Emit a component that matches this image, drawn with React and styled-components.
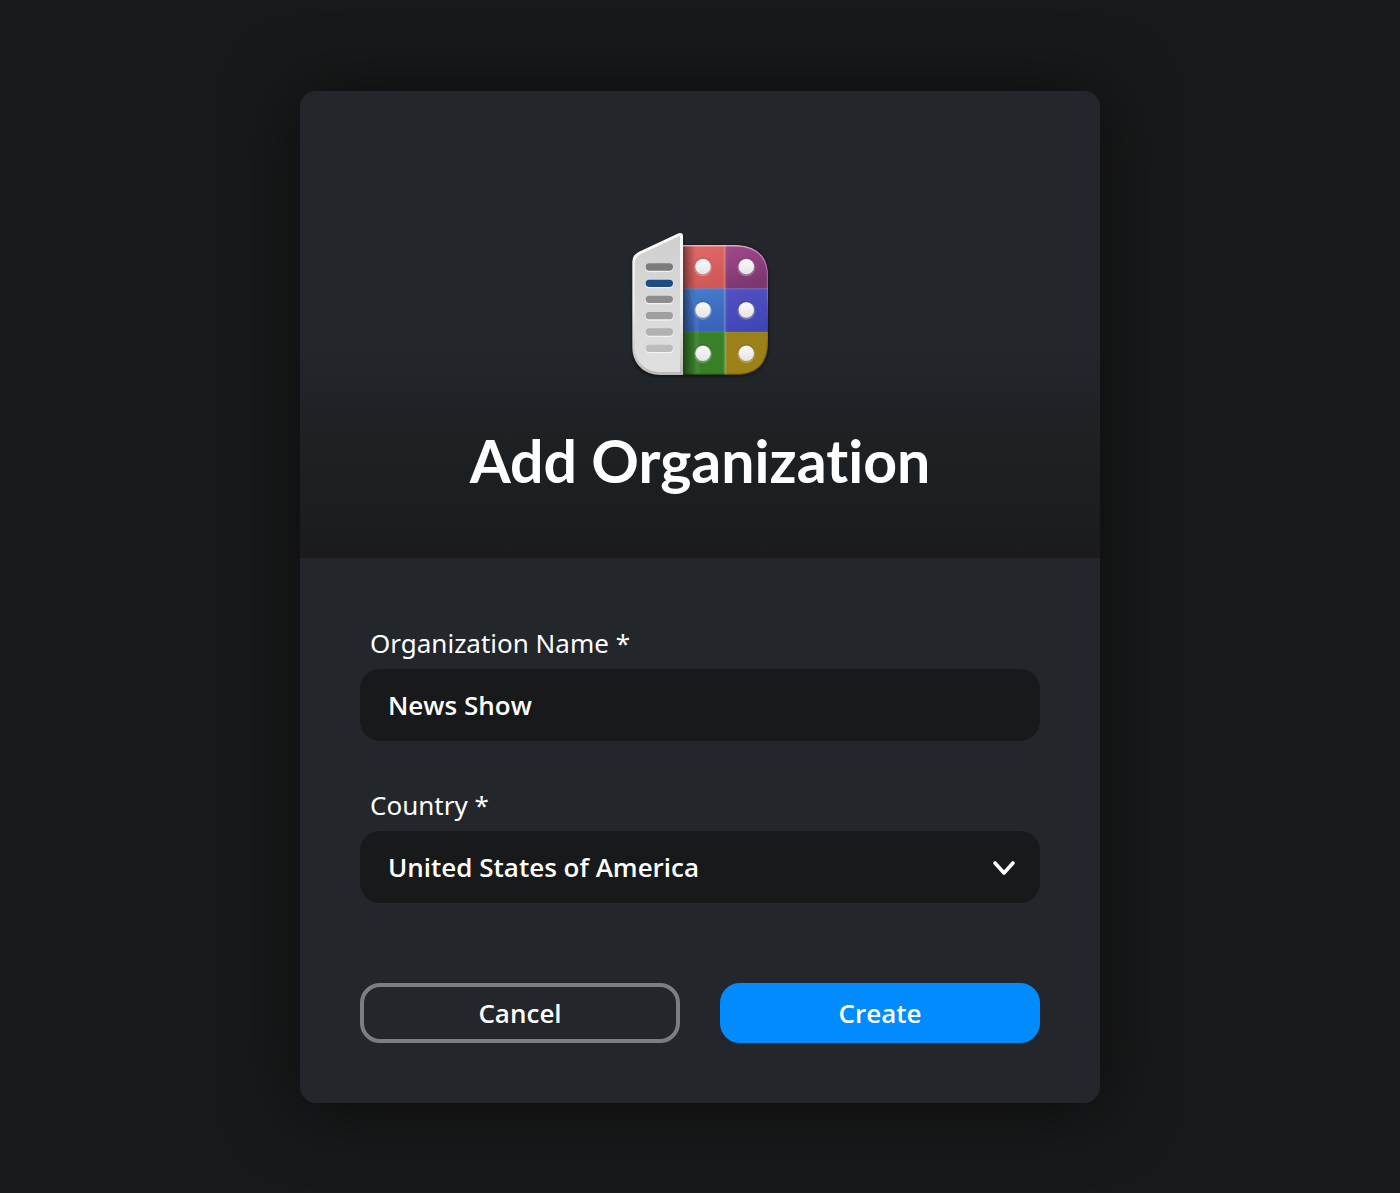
import React, { useState } from "react";
import styled, { createGlobalStyle, css } from "styled-components";

const GlobalStyle = createGlobalStyle`
  *, *::before, *::after { box-sizing: border-box; }
  body {
    margin: 0;
    background: #18191a;
    color: #fff;
    font-family: "Open Sans", "Noto Sans", sans-serif;
    font-size: 26px;
  }
`;

const Page = styled.main`
  min-height: 100vh;
  display: grid;
  grid-template-columns: minmax(0, 800px);
  place-content: center;
  padding: 40px 0;
`;

const Card = styled.section`
  border-radius: 16px;
  overflow: hidden;
  background: #23262b;
  box-shadow: 0 4px 70px rgba(0, 0, 0, 0.55);
`;

const Header = styled.header`
  display: flex;
  flex-direction: column;
  align-items: center;
  gap: 36px;
  padding: 134px 40px 57px;
  background: linear-gradient(#23262b 54%, #1d2123 76%, #1b1b1e 100%);
`;

const Title = styled.h1`
  margin: 0;
  font-family: Lato, sans-serif;
  font-size: 59px;
  line-height: 80px;
  font-weight: 700;
  font-variant-ligatures: none;
`;

const Form = styled.form`
  display: flex;
  flex-direction: column;
  gap: 39px;
  padding: 60px;
`;

const Field = styled.div`
  display: flex;
  flex-direction: column;
`;

const Label = styled.label`
  padding-left: 10px;
  font-family: "Noto Sans", "Open Sans", sans-serif;
  line-height: 51px;
`;

const control = css`
  width: 100%;
  height: 72px;
  border: 0;
  border-radius: 20px;
  padding: 0 28px;
  background: #18191a;
  color: inherit;
  font: inherit;
  font-weight: 600;
  outline-color: #008cff;
`;

const Input = styled.input`
  ${control}
`;

const SelectWrap = styled.div`
  display: grid;
  align-items: center;
  & > * { grid-area: 1 / 1; }
`;

const Select = styled.select`
  ${control}
  appearance: none;
`;

const Chevron = styled.svg`
  justify-self: end;
  margin-right: 20px;
  pointer-events: none;
`;

const Actions = styled.div`
  display: grid;
  grid-template-columns: 1fr 1fr;
  gap: 40px;
  padding-top: 41px;
`;

const Button = styled.button`
  height: 60px;
  border: 4px solid ${(p) => (p.$primary ? "#008cff" : "#7b7e80")};
  border-radius: 20px;
  background: ${(p) => (p.$primary ? "#008cff" : "transparent")};
  color: inherit;
  font: inherit;
  font-weight: 600;
  line-height: 36px;
  cursor: pointer;
`;

const tiles = [
  [186, 60, 129, 131, "red"],
  [315, 60, 130, 131, "purple"],
  [186, 191, 129, 130, "blue"],
  [315, 191, 130, 130, "indigo"],
  [186, 321, 129, 130, "green"],
  [315, 321, 130, 130, "gold"],
];

const tileColors = {
  red: ["#e36a6a", "#d05957"],
  purple: ["#a34a8d", "#7c376f"],
  blue: ["#4680cf", "#3a63bb"],
  indigo: ["#5450c4", "#4047b4"],
  green: ["#39822b", "#387f28"],
  gold: ["#9b811c", "#9d8117"],
};

const bars = [
  [126, "#7c7c7c"],
  [175, "#1d4b84"],
  [223, "#8d8d8d"],
  [272, "#9f9f9f"],
  [321, "#b1b1b1"],
  [370, "#bcbcbc"],
];

function AppLogo() {
  return (
    <svg width="160" height="160" viewBox="0 0 480 480" aria-hidden="true">
      <defs>
        {Object.entries(tileColors).map(([name, [from, to]]) => (
          <linearGradient key={name} id={name} x1="0" y1="0" x2="0.3" y2="1">
            <stop stopColor={from} />
            <stop offset="1" stopColor={to} />
          </linearGradient>
        ))}
        <linearGradient id="page" x1="0" y1="0" x2="0" y2="1">
          <stop stopColor="#cfcfcf" />
          <stop offset="0.5" stopColor="#d9d9d9" />
          <stop offset="1" stopColor="#dfdfdf" />
        </linearGradient>
        <linearGradient id="pageEdge" x1="0" y1="0" x2="0" y2="1">
          <stop stopColor="#fafafa" />
          <stop offset="0.55" stopColor="#ededed" />
          <stop offset="1" stopColor="#b9b9b9" />
        </linearGradient>
        <linearGradient id="fold" x1="0" y1="0" x2="1" y2="0">
          <stop stopColor="#000" stopOpacity="0.5" />
          <stop offset="0.5" stopColor="#000" stopOpacity="0.22" />
          <stop offset="1" stopColor="#000" stopOpacity="0" />
        </linearGradient>
        <linearGradient id="seam" x1="0" y1="0" x2="1" y2="0">
          <stop stopColor="#fff" stopOpacity="0" />
          <stop offset="0.5" stopColor="#fff" stopOpacity="0.22" />
          <stop offset="1" stopColor="#fff" stopOpacity="0" />
        </linearGradient>
        <linearGradient id="rim" x1="0" y1="0" x2="0" y2="1">
          <stop stopColor="#ffd8e4" stopOpacity="0.65" />
          <stop offset="0.06" stopColor="#f0a0e8" stopOpacity="0.6" />
          <stop offset="0.4" stopColor="#b8a0ff" stopOpacity="0.3" />
          <stop offset="0.7" stopColor="#000" stopOpacity="0.1" />
          <stop offset="1" stopColor="#000" stopOpacity="0.4" />
        </linearGradient>
        <linearGradient id="dot" x1="0" y1="0" x2="0" y2="1">
          <stop stopColor="#fafafa" />
          <stop offset="1" stopColor="#e4e4e4" />
        </linearGradient>
        <clipPath id="cover">
          <path d="M186 60H350Q444 64 444 154V352Q444 450 346 450H186Z" />
        </clipPath>
        <filter id="soft" x="-20%" y="-20%" width="140%" height="140%">
          <feGaussianBlur stdDeviation="4" />
        </filter>
      </defs>
      <path
        d="M38 95L188 25V60H350Q446 64 446 154V352Q446 454 346 454H110Q38 448 36 372Z"
        fill="#000"
        opacity="0.5"
        filter="url(#soft)"
      />
      <g clipPath="url(#cover)">
        {tiles.map(([x, y, w, h, name]) => (
          <rect key={name} x={x} y={y} width={w} height={h} fill={`url(#${name})`} />
        ))}
        <path d="M188 191H445" stroke="#a8b8ff" strokeOpacity="0.35" strokeWidth="4" />
        <path d="M188 321H445" stroke="#fff" strokeOpacity="0.12" strokeWidth="2" />
        <rect x="309" y="60" width="12" height="391" fill="url(#seam)" />
        <rect x="188" y="60" width="40" height="391" fill="url(#fold)" />
        <path d="M205 180L222 260L226 451H240L236 280L212 180Z" fill="#fff" opacity="0.05" />
        <path
          d="M180 62H350Q443 66 443 154V352Q443 449 346 449H180"
          fill="none"
          stroke="url(#rim)"
          strokeWidth="5"
        />
      </g>
      {[125, 255, 385].map((cy) =>
        [249, 379].map((cx) => (
          <g key={`${cx}-${cy}`}>
            <circle cx={cx} cy={cy - 1} r="27" fill="#000" opacity="0.14" />
            <circle cx={cx} cy={cy + 2} r="27" fill="#fff" opacity="0.28" />
            <circle cx={cx} cy={cy} r="23" fill="url(#dot)" />
          </g>
        ))
      )}
      <path
        d="M57 80L176 25Q189 21 189 34V450H122C70 450 37 415 37 366V110Q37 90 57 80Z"
        fill="url(#pageEdge)"
      />
      <path
        d="M63 87L180 32V441H124C75 441 44 410 44 366V116Q44 97 63 87Z"
        fill="url(#page)"
      />
      {bars.map(([cy, color]) => (
        <g key={cy}>
          <rect x="76" y={cy - 9} width="84" height="24" rx="12" fill="#fff" opacity="0.65" />
          <rect x="77" y={cy - 11} width="82" height="22" rx="11" fill={color} />
        </g>
      ))}
    </svg>
  );
}

export default function App() {
  const [name, setName] = useState("News Show");
  return (
    <>
      <GlobalStyle />
      <Page>
        <Card aria-labelledby="title">
          <Header>
            <AppLogo />
            <Title id="title">Add Organization</Title>
          </Header>
          <Form onSubmit={(e) => e.preventDefault()}>
            <Field>
              <Label htmlFor="name">Organization Name *</Label>
              <Input id="name" value={name} onChange={(e) => setName(e.target.value)} />
            </Field>
            <Field>
              <Label htmlFor="country">Country *</Label>
              <SelectWrap>
                <Select id="country">
                  <option>United States of America</option>
                </Select>
                <Chevron width="32" height="32" viewBox="0 0 32 32" fill="none" aria-hidden="true">
                  <path
                    d="M7 12L16 22L25 12"
                    stroke="#fff"
                    strokeWidth="3.6"
                    strokeLinecap="round"
                    strokeLinejoin="round"
                  />
                </Chevron>
              </SelectWrap>
            </Field>
            <Actions>
              <Button type="button">Cancel</Button>
              <Button type="submit" $primary>Create</Button>
            </Actions>
          </Form>
        </Card>
      </Page>
    </>
  );
}
